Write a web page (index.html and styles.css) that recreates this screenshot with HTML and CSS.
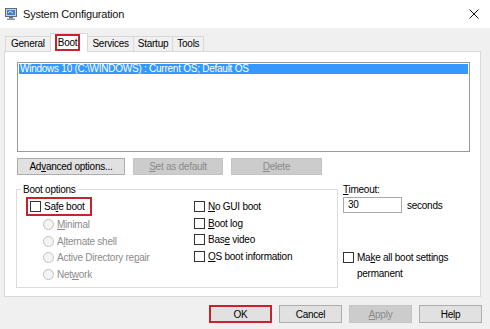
FILE: index.html
```html
<!DOCTYPE html>
<html>
<head>
  <title>System Configuration</title>
  <meta name="viewport" content="width=device-width, initial-scale=1">
  <link rel="stylesheet" href="styles.css">
</head>
<body>
  <div class="titlebar">
    <svg class="app-icon" width="12" height="12" viewBox="0 0 12 12">
      <rect x="0.5" y="0.5" width="11" height="8" fill="#c9d3de" stroke="#5d6b7c"/>
      <rect x="2" y="2" width="8" height="5" fill="#3f7fd0"/>
      <path d="M3 5 L5 3 L8 5" stroke="#dfe9f5" stroke-width="1" fill="none"/>
      <rect x="4" y="9" width="4" height="1.5" fill="#5d6b7c"/>
      <rect x="2" y="10.5" width="8" height="1.5" fill="#8a96a4"/>
    </svg>
    <span class="title">System Configuration</span>
    <svg class="close" width="10" height="10" viewBox="0 0 10 10">
      <path d="M0.5 0.5 L9.5 9.5 M9.5 0.5 L0.5 9.5" stroke="#111" stroke-width="1"/>
    </svg>
  </div>

  <div class="tabs">
    <div class="tab">General</div>
    <div class="tab active"><span class="mark">Boot</span></div>
    <div class="tab">Services</div>
    <div class="tab">Startup</div>
    <div class="tab">Tools</div>
  </div>

  <div class="panel">
    <div class="os-list">
      <div class="os-item selected">Windows 10 (C:\WINDOWS) : Current OS; Default OS</div>
    </div>

    <div class="list-actions">
      <button class="btn btn-advanced">Ad<u>v</u>anced options...</button>
      <button class="btn btn-default" disabled><u>S</u>et as default</button>
      <button class="btn btn-delete" disabled><u>D</u>elete</button>
    </div>

    <div class="options-row">
      <fieldset class="boot-options">
        <legend>Boot options</legend>
        <div class="option-cols">
          <div class="col col-left">
            <div class="row highlight"><span class="box"></span><span>Sa<u>f</u>e boot</span></div>
            <div class="row sub disabled"><span class="radio"></span><span><u>M</u>inimal</span></div>
            <div class="row sub disabled"><span class="radio"></span><span>A<u>l</u>ternate shell</span></div>
            <div class="row sub disabled"><span class="radio"></span><span>Active Directory re<u>p</u>air</span></div>
            <div class="row sub disabled"><span class="radio"></span><span>Net<u>w</u>ork</span></div>
          </div>
          <div class="col col-right">
            <div class="row"><span class="box"></span><span><u>N</u>o GUI boot</span></div>
            <div class="row"><span class="box"></span><span><u>B</u>oot log</span></div>
            <div class="row"><span class="box"></span><span>Bas<u>e</u> video</span></div>
            <div class="row"><span class="box"></span><span><u>O</u>S boot information</span></div>
          </div>
        </div>
      </fieldset>

      <div class="timeout">
        <div class="timeout-label"><u>T</u>imeout:</div>
        <div class="timeout-field">
          <div class="input">30</div>
          <span class="unit">seconds</span>
        </div>
        <div class="permanent">
          <span class="box"></span>
          <span class="permanent-text">Ma<u>k</u>e all boot settings permanent</span>
        </div>
      </div>
    </div>
  </div>

  <div class="footer">
    <button class="btn btn-footer btn-ok">OK</button>
    <button class="btn btn-footer">Cancel</button>
    <button class="btn btn-footer" disabled><u>A</u>pply</button>
    <button class="btn btn-footer">Help</button>
  </div>
</body>
</html>
```

FILE: styles.css
```css
body {
  margin: 0;
  width: 490px;
  height: 329px;
  overflow: hidden;
  background-color: #f0f0f0;
  font-family: "Liberation Sans", Arial, sans-serif;
  font-size: 10px;
  letter-spacing: -0.25px;
  color: #000;
}
u {
  text-decoration-thickness: 1px;
  text-underline-offset: 1px;
}

/* title bar */
.titlebar {
  height: 28px;
  background: #fff;
  display: flex;
  align-items: center;
  padding-left: 5px;
}
.app-icon {
  margin-right: 6px;
}
.title {
  font-size: 11px;
  letter-spacing: -0.2px;
  color: #111;
}
.close {
  margin-left: auto;
  margin-right: 11px;
}

/* tabs */
.tabs {
  height: 23px;
  display: flex;
  align-items: flex-end;
  padding-left: 5px;
}
.tab {
  box-sizing: border-box;
  height: 15px;
  line-height: 14px;
  padding: 0 4px;
  border: 1px solid #d9d9d9;
  border-bottom: none;
  background: #f0f0f0;
  margin-right: -1px;
}
.tab:first-child {
  padding: 0 5px;
}
.tab.active {
  height: 19px;
  padding: 0 7px 0 4px;
  background: #fff;
  margin-bottom: -1px;
  position: relative;
  z-index: 1;
}
.mark {
  display: block;
  height: 17px;
  box-sizing: border-box;
  line-height: 13px;
  padding: 0 1px;
  border: 2px solid #c8232c;
}

/* tab panel */
.panel {
  box-sizing: border-box;
  height: 246px;
  margin: 0 9px 0 4px;
  background: #fff;
  border: 1px solid #d9d9d9;
  padding: 10px 0 0 12px;
}
.os-list {
  box-sizing: border-box;
  width: 453px;
  height: 90px;
  border: 1px solid #9a9a9a;
  padding: 1px;
}
.os-item {
  line-height: 10px;
  height: 10px;
  padding: 0 1px;
}
.os-item.selected {
  background: #3399ff;
  color: #fff;
}

.btn {
  box-sizing: border-box;
  font-family: inherit;
  font-size: 10px;
  letter-spacing: -0.25px;
  background: #e1e1e1;
  border: 1px solid #adadad;
  color: #000;
  padding: 0;
  margin: 0;
}
.btn:disabled {
  background: #cccccc;
  border-color: #c4c4c4;
  color: #8a8a8a;
}
.list-actions {
  display: flex;
  gap: 8px;
  margin-top: 6px;
}
.list-actions .btn {
  height: 17px;
}
.btn-advanced { width: 108px; }
.btn-default { width: 90px; }
.btn-delete { width: 91px; }

/* boot options */
.options-row {
  display: flex;
  margin-top: 8px;
}
.boot-options {
  box-sizing: border-box;
  width: 322px;
  margin: 0 0 0 -1px;
  padding: 1px 0 4px;
  border: 1px solid #dcdcdc;
  min-width: 0;
}
.boot-options legend {
  line-height: 13px;
  padding: 0 2px;
  margin-left: 4px;
}
.option-cols {
  display: flex;
}
.col-left {
  width: 168px;
  padding-left: 9px;
}
.col-right {
  padding-top: 1px;
}
.row {
  display: flex;
  align-items: center;
  height: 16.7px;
  white-space: nowrap;
}
.row.highlight {
  box-sizing: border-box;
  height: 19px;
  width: 66px;
  border: 2px solid #c8232c;
  padding-left: 2px;
}
.row.sub {
  padding-left: 17px;
}
.disabled {
  color: #8c8c8c;
}
.box {
  box-sizing: border-box;
  width: 11px;
  height: 11px;
  border: 1px solid #333;
  background: #fff;
  margin-right: 3px;
  flex-shrink: 0;
}
.radio {
  box-sizing: border-box;
  width: 11px;
  height: 11px;
  border: 1px solid #c2c2c2;
  border-radius: 50%;
  background: #f4f4f4;
  margin-right: 3px;
}

/* timeout column */
.timeout {
  width: 128px;
  margin-left: 5px;
}
.timeout-label {
  line-height: 13px;
}
.timeout-field {
  display: flex;
  align-items: center;
  margin-top: 1px;
}
.input {
  box-sizing: border-box;
  width: 59px;
  height: 16px;
  line-height: 14px;
  border: 1px solid #a8a8a8;
  padding-left: 4px;
  background: #fff;
}
.unit {
  margin-left: 5px;
}
.permanent {
  display: flex;
  align-items: flex-start;
  margin-top: 39px;
}
.permanent-text {
  line-height: 16px;
  margin-top: -2px;
}

/* dialog buttons */
.footer {
  display: flex;
  justify-content: flex-end;
  gap: 7px;
  margin-top: 8px;
  padding-right: 8px;
}
.btn-footer {
  width: 63px;
  height: 18px;
}
.btn-ok {
  border: 2px solid #c8232c;
}
```
